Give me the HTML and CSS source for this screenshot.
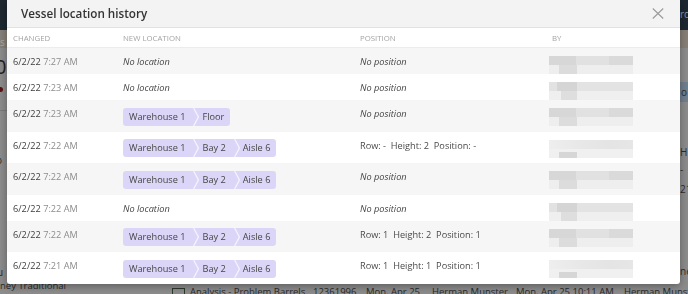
FILE: index.html
```html
<!DOCTYPE html>
<html lang="en">
<head>
<meta charset="utf-8">
<title>Vessel location history</title>
<link rel="stylesheet" href="styles.css">
</head>
<body>
<div class="app">
  <header class="topbar">
    <span class="tb-left"></span>
    <span class="tb-right">ro</span>
  </header>
  <div class="app-body">
    <aside class="side">
      <span class="side-s">s</span>
      <span class="side-big">0</span>
      <span class="side-dot"></span>
      <span class="side-line"></span>
      <span class="side-o">o</span>
      <span class="side-u">u</span>
    </aside>
    <div class="main"></div>
    <aside class="rside">
      <span class="rs-btn">o</span>
      <span class="rs-h">H</span>
      <span class="rs-dash">-</span>
      <span class="rs-21">21</span>
      <span class="rs-ne">ne</span>
    </aside>
  </div>
  <div class="bottom-row">
    <span class="b-left">ney Traditional</span>
    <span class="chk"></span>
    <span class="b-name">Analysis - Problem Barrels</span>
    <span class="b-num">12361996</span>
    <span class="b-d1">Mon, Apr 25</span>
    <span class="b-p1">Herman Munster</span>
    <span class="b-d2">Mon, Apr 25 10:11 AM</span>
    <span class="b-p2">Herman Munster</span>
  </div>
</div>

<div class="modal">
  <div class="modal-head">
    <h2 class="modal-title">Vessel location history</h2>
    <button class="close" aria-label="Close">
      <svg width="12" height="11" viewBox="0 0 12 11"><path d="M0.8 0.5 L11.2 10.5 M11.2 0.5 L0.8 10.5" stroke="#9a9a9a" stroke-width="1.1" fill="none"/></svg>
    </button>
  </div>
  <div class="table">
    <div class="grid thead">
      <span>Changed</span>
      <span>New location</span>
      <span>Position</span>
      <span class="th-by">By</span>
    </div>

    <div class="grid tr odd txt">
      <span class="date">6/2/22 <em>7:27 AM</em></span>
      <span class="none">No location</span>
      <span class="none">No position</span>
      <span class="blur b1"></span>
    </div>
    <div class="grid tr txt">
      <span class="date">6/2/22 <em>7:23 AM</em></span>
      <span class="none">No location</span>
      <span class="none">No position</span>
      <span class="blur b2"></span>
    </div>
    <div class="grid tr odd">
      <span class="date">6/2/22 <em>7:23 AM</em></span>
      <span class="chip"><span>Warehouse 1</span><svg class="sep" viewBox="0 0 6 18" preserveAspectRatio="none"><path d="M0.6 0 L5.4 9 L0.6 18" /></svg><span>Floor</span></span>
      <span class="none">No position</span>
      <span class="blur b1"></span>
    </div>
    <div class="grid tr">
      <span class="date">6/2/22 <em>7:22 AM</em></span>
      <span class="chip"><span>Warehouse 1</span><svg class="sep" viewBox="0 0 6 18" preserveAspectRatio="none"><path d="M0.6 0 L5.4 9 L0.6 18" /></svg><span>Bay 2</span><svg class="sep" viewBox="0 0 6 18" preserveAspectRatio="none"><path d="M0.6 0 L5.4 9 L0.6 18" /></svg><span>Aisle 6</span></span>
      <span class="pos">Row: -&nbsp; Height: 2&nbsp; Position: -</span>
      <span class="blur b3"></span>
    </div>
    <div class="grid tr odd">
      <span class="date">6/2/22 <em>7:22 AM</em></span>
      <span class="chip"><span>Warehouse 1</span><svg class="sep" viewBox="0 0 6 18" preserveAspectRatio="none"><path d="M0.6 0 L5.4 9 L0.6 18" /></svg><span>Bay 2</span><svg class="sep" viewBox="0 0 6 18" preserveAspectRatio="none"><path d="M0.6 0 L5.4 9 L0.6 18" /></svg><span>Aisle 6</span></span>
      <span class="none">No position</span>
      <span class="blur b1"></span>
    </div>
    <div class="grid tr txt">
      <span class="date">6/2/22 <em>7:22 AM</em></span>
      <span class="none">No location</span>
      <span class="none">No position</span>
      <span class="blur b2"></span>
    </div>
    <div class="grid tr odd">
      <span class="date">6/2/22 <em>7:22 AM</em></span>
      <span class="chip"><span>Warehouse 1</span><svg class="sep" viewBox="0 0 6 18" preserveAspectRatio="none"><path d="M0.6 0 L5.4 9 L0.6 18" /></svg><span>Bay 2</span><svg class="sep" viewBox="0 0 6 18" preserveAspectRatio="none"><path d="M0.6 0 L5.4 9 L0.6 18" /></svg><span>Aisle 6</span></span>
      <span class="pos">Row: 1&nbsp; Height: 2&nbsp; Position: 1</span>
      <span class="blur b1"></span>
    </div>
    <div class="grid tr">
      <span class="date">6/2/22 <em>7:21 AM</em></span>
      <span class="chip"><span>Warehouse 1</span><svg class="sep" viewBox="0 0 6 18" preserveAspectRatio="none"><path d="M0.6 0 L5.4 9 L0.6 18" /></svg><span>Bay 2</span><svg class="sep" viewBox="0 0 6 18" preserveAspectRatio="none"><path d="M0.6 0 L5.4 9 L0.6 18" /></svg><span>Aisle 6</span></span>
      <span class="pos">Row: 1&nbsp; Height: 1&nbsp; Position: 1</span>
      <span class="blur b3"></span>
    </div>
  </div>
</div>
</body>
</html>
```

FILE: styles.css
```css
* { box-sizing: border-box; }
html, body { margin: 0; padding: 0; }
body {
  width: 688px;
  height: 294px;
  overflow: hidden;
  font-family: "Open Sans", "Liberation Sans", sans-serif;
  background: #8b8b8b;
  color: #333;
}

/* ---------- dimmed background app ---------- */
.app {
  height: 294px;
  display: flex;
  flex-direction: column;
}
.topbar {
  height: 30px;
  background: #1d2731;
  display: flex;
  justify-content: space-between;
  align-items: center;
}
.tb-right {
  color: #8f98a2;
  font-size: 10px;
  margin-right: -2px;
  margin-bottom: 2px;
}
.app-body {
  flex: 1;
  display: flex;
  background: #8c8c8c;
}
.side {
  width: 8px;
  overflow: hidden;
  display: flex;
  flex-direction: column;
  font-size: 10px;
  color: #2c2c2c;
  background: linear-gradient(#858079 0, #858079 18px, #8c8c8c 18px);
}
.side span { display: block; white-space: nowrap; }
.side-s { margin-top: 5px; color: #b0aaa2; height: 10px; }
.side-big { font-size: 20px; line-height: 20px; margin-top: 12px; margin-left: -5px; color: #222; }
.side-dot { width: 5px; height: 5px; border-radius: 50%; background: #5a1414; margin-top: 10px; margin-left: -2px; }
.side-line { height: 1px; background: #7a7a7a; margin-top: 18px; width: 8px; }
.side-o { margin-top: 42px; margin-left: -4px; height: 12px; }
.side-u { margin-top: 100px; margin-left: -3px; height: 12px; }
.main { flex: 1; }
.rside {
  width: 8px;
  overflow: hidden;
  display: flex;
  flex-direction: column;
  font-size: 10px;
  color: #2c2c2c;
  background: linear-gradient(#878078 0, #878078 18px, #8c8c8c 18px);
}
.rside span { display: block; white-space: nowrap; }
.rs-btn { margin-top: 52px; height: 20px; line-height: 20px; background: #70808e; padding-left: 1px; }
.rs-h { margin-top: 43px; height: 12px; }
.rs-dash { margin-top: 5px; height: 12px; }
.rs-21 { margin-top: 8px; height: 12px; }
.rs-ne { margin-top: 70px; height: 12px; }
.bottom-row {
  height: 10px;
  background: #8c8c8c;
  display: flex;
  align-items: flex-start;
  font-size: 9.5px;
  line-height: 13px;
  color: #2a2a2a;
  white-space: nowrap;
  overflow: hidden;
}
.bottom-row > span { flex: none; }
.b-left { width: 172px; margin-top: -5px; }
.chk {
  width: 13px;
  height: 13px;
  border: 1px solid #2e3a2e;
  margin-top: 4px;
  margin-right: 5px;
}
.b-name { width: 123px; margin-top: 1px; }
.b-num { width: 53px; margin-top: 1px; }
.b-d1 { width: 66px; margin-top: 1px; }
.b-p1 { width: 84px; margin-top: 1px; }
.b-d2 { width: 108px; margin-top: 1px; }
.b-p2 { margin-top: 1px; }

/* ---------- modal ---------- */
.modal {
  position: fixed;
  top: 0;
  left: 7px;
  width: 673px;
  background: #fff;
  border-radius: 0 0 3px 3px;
  box-shadow: 0 2px 8px rgba(0,0,0,0.35);
  overflow: hidden;
}
.modal-head {
  height: 28px;
  background: #f3f3f3;
  border-bottom: 1px solid #e2e2e2;
  display: flex;
  align-items: center;
  justify-content: space-between;
  padding: 0 16px 1px 14px;
}
.modal-title {
  margin: 0;
  font-size: 11.7px;
  font-weight: 600;
  color: #333;
}
.close {
  border: 0;
  background: none;
  padding: 0;
  width: 12px;
  height: 11px;
  display: flex;
}

.grid {
  display: grid;
  grid-template-columns: 110px 237px 189px 1fr;
  padding-left: 6px;
  align-items: start;
}
.thead {
  height: 20px;
  align-items: center;
  border-bottom: 1px solid #ececec;
  font-size: 7.8px;
  text-transform: uppercase;
  color: #a3a3a3;
}
.th-by { padding-left: 3px; }

.tr {
  font-size: 9.2px;
  color: #444;
  padding-top: 4px;
}
.tr.odd { background: #f6f6f6; }
.tr > span { line-height: 19px; }
.date { color: #3e3e3e; }
.date em { font-style: normal; color: #8d8d8d; }
.none { font-style: italic; color: #444; }
.pos { color: #4a4a4a; }

.chip {
  display: inline-flex;
  height: 18px;
  margin-top: 3.5px;
  margin-bottom: 6px;
  justify-self: start;
  background: #dbd6f7;
  border-radius: 3px;
  padding: 0 6px;
  align-items: center;
  color: #454545;
}
.tr > .chip { line-height: 18px; }
.sep {
  width: 6px;
  height: 18px;
  margin: 0 3px 0 8px;
  fill: none;
  stroke: #f6f5fe;
  stroke-width: 1.2;
}

.blur {
  width: 84px;
  height: 18px;
  margin-top: 4px;
  background:
    linear-gradient(90deg, transparent 0, transparent 10px, #dcdcdc 10px, #dcdcdc 28px, transparent 28px) 0 9px / 100% 9px no-repeat,
    linear-gradient(90deg, #d7d7d7 0, #d7d7d7 27px, #e1e1e1 27px, #e1e1e1 60px, #dadada 60px) 0 0 / 100% 9px no-repeat,
    #eeeeee;
}
.b2 {
  background:
    linear-gradient(90deg, transparent 0, transparent 12px, #dedede 12px, #dedede 28px, transparent 28px) 0 9px / 100% 9px no-repeat,
    linear-gradient(90deg, #e2e2e2 0, #e2e2e2 8px, #d5d5d5 8px, #d5d5d5 28px, #e3e3e3 28px, #e3e3e3 84px) 0 0 / 100% 9px no-repeat,
    #efefef;
}
.b3 {
  background:
    linear-gradient(90deg, transparent 0, transparent 10px, #d6d6d6 10px, #d6d6d6 28px, transparent 28px) 0 12px / 100% 6px no-repeat,
    linear-gradient(90deg, #eeeeee 0, #e8e8e8 30px, #e4e4e4 60px, #e6e6e6 84px) 0 0 / 100% 9px no-repeat,
    #f0f0f0;
}
```
